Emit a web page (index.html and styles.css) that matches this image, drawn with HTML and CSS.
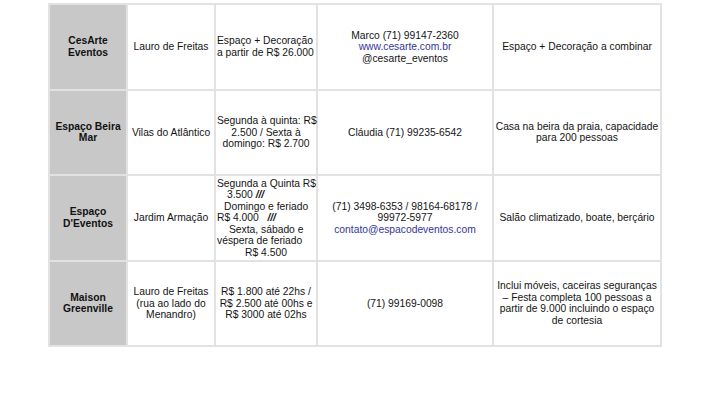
FILE: index.html
```html
<!DOCTYPE html>
<html lang="pt-BR">
<head>
<meta charset="utf-8">
<title>Espaços para eventos</title>
<link rel="stylesheet" href="styles.css">
</head>
<body>
<table class="venues">
  <colgroup>
    <col class="c-name"><col class="c-loc"><col class="c-price"><col class="c-contact"><col class="c-notes">
  </colgroup>
  <tbody>
    <tr>
      <th class="name">CesArte<br>Eventos</th>
      <td>Lauro de Freitas</td>
      <td class="left">Espaço + Decoração<br>a partir de R$ 26.000</td>
      <td>Marco (71) 99147-2360<br><a class="link" href="#">www.cesarte.com.br</a><br>@cesarte_eventos</td>
      <td>Espaço + Decoração a combinar</td>
    </tr>
    <tr>
      <th class="name">Espaço Beira<br>Mar</th>
      <td>Vilas do Atlântico</td>
      <td>Segunda à quinta: R$<br>2.500 / Sexta à<br>domingo: R$ 2.700</td>
      <td>Cláudia (71) 99235-6542</td>
      <td>Casa na beira da praia, capacidade<br>para 200 pessoas</td>
    </tr>
    <tr>
      <th class="name">Espaço<br>D'Eventos</th>
      <td>Jardim Armação</td>
      <td class="left">
        <div class="ln">Segunda a Quinta R$</div>
        <div class="ln ind2">3.500 <i>///</i></div>
        <div class="ln ind1">Domingo e feriado</div>
        <div class="ln">R$ 4.000 &nbsp;&nbsp;<i>///</i></div>
        <div class="ln ind3">Sexta, sábado e</div>
        <div class="ln">véspera de feriado</div>
        <div class="ln center">R$ 4.500</div>
      </td>
      <td>(71) 3498-6353 / 98164-68178 /<br>99972-5977<br><a class="link" href="#">contato@espacodeventos.com</a></td>
      <td>Salão climatizado, boate, berçário</td>
    </tr>
    <tr>
      <th class="name">Maison<br>Greenville</th>
      <td>Lauro de Freitas<br>(rua ao lado do<br>Menandro)</td>
      <td>R$ 1.800 até 22hs /<br>R$ 2.500 até 00hs e<br>R$ 3000 até 02hs</td>
      <td>(71) 99169-0098</td>
      <td>Inclui móveis, caceiras seguranças<br>– Festa completa 100 pessoas a<br>partir de 9.000 incluindo o espaço<br>de cortesia</td>
    </tr>
  </tbody>
</table>
</body>
</html>
```
FILE: styles.css
```css
html, body {
  margin: 0;
  padding: 0;
  background: #ffffff;
}

body {
  font-family: "Liberation Sans", Arial, sans-serif;
  font-size: 10.3px;
  line-height: 11.5px;
  color: #141414;
}

.venues {
  margin: 3px 0 0 48px;
  width: 612px;
  table-layout: fixed;
  border-collapse: collapse;
  border: 1px solid #d4d4d4;
}

.c-name { width: 78px; }
.c-loc { width: 88px; }
.c-price { width: 102px; }
.c-contact { width: 176px; }
.c-notes { width: 168px; }

.venues tr {
  height: 85.5px;
}

.venues th,
.venues td {
  border: 2px solid #e2e2e2;
  padding: 0 1px;
  text-align: center;
  vertical-align: middle;
  font-weight: normal;
  white-space: nowrap;
}

.venues th.name {
  background: #c8c8c8;
  font-weight: bold;
  color: #111111;
  padding: 0 4px;
}

.venues td.left {
  text-align: left;
}

.ln { white-space: nowrap; }
.ind1 { padding-left: 7px; }
.ind2 { padding-left: 10px; }
.ind3 { padding-left: 12px; }
.center { text-align: center; }

.link {
  color: #35359c;
  text-decoration: none;
}

i { font-style: italic; font-weight: bold; }
```
